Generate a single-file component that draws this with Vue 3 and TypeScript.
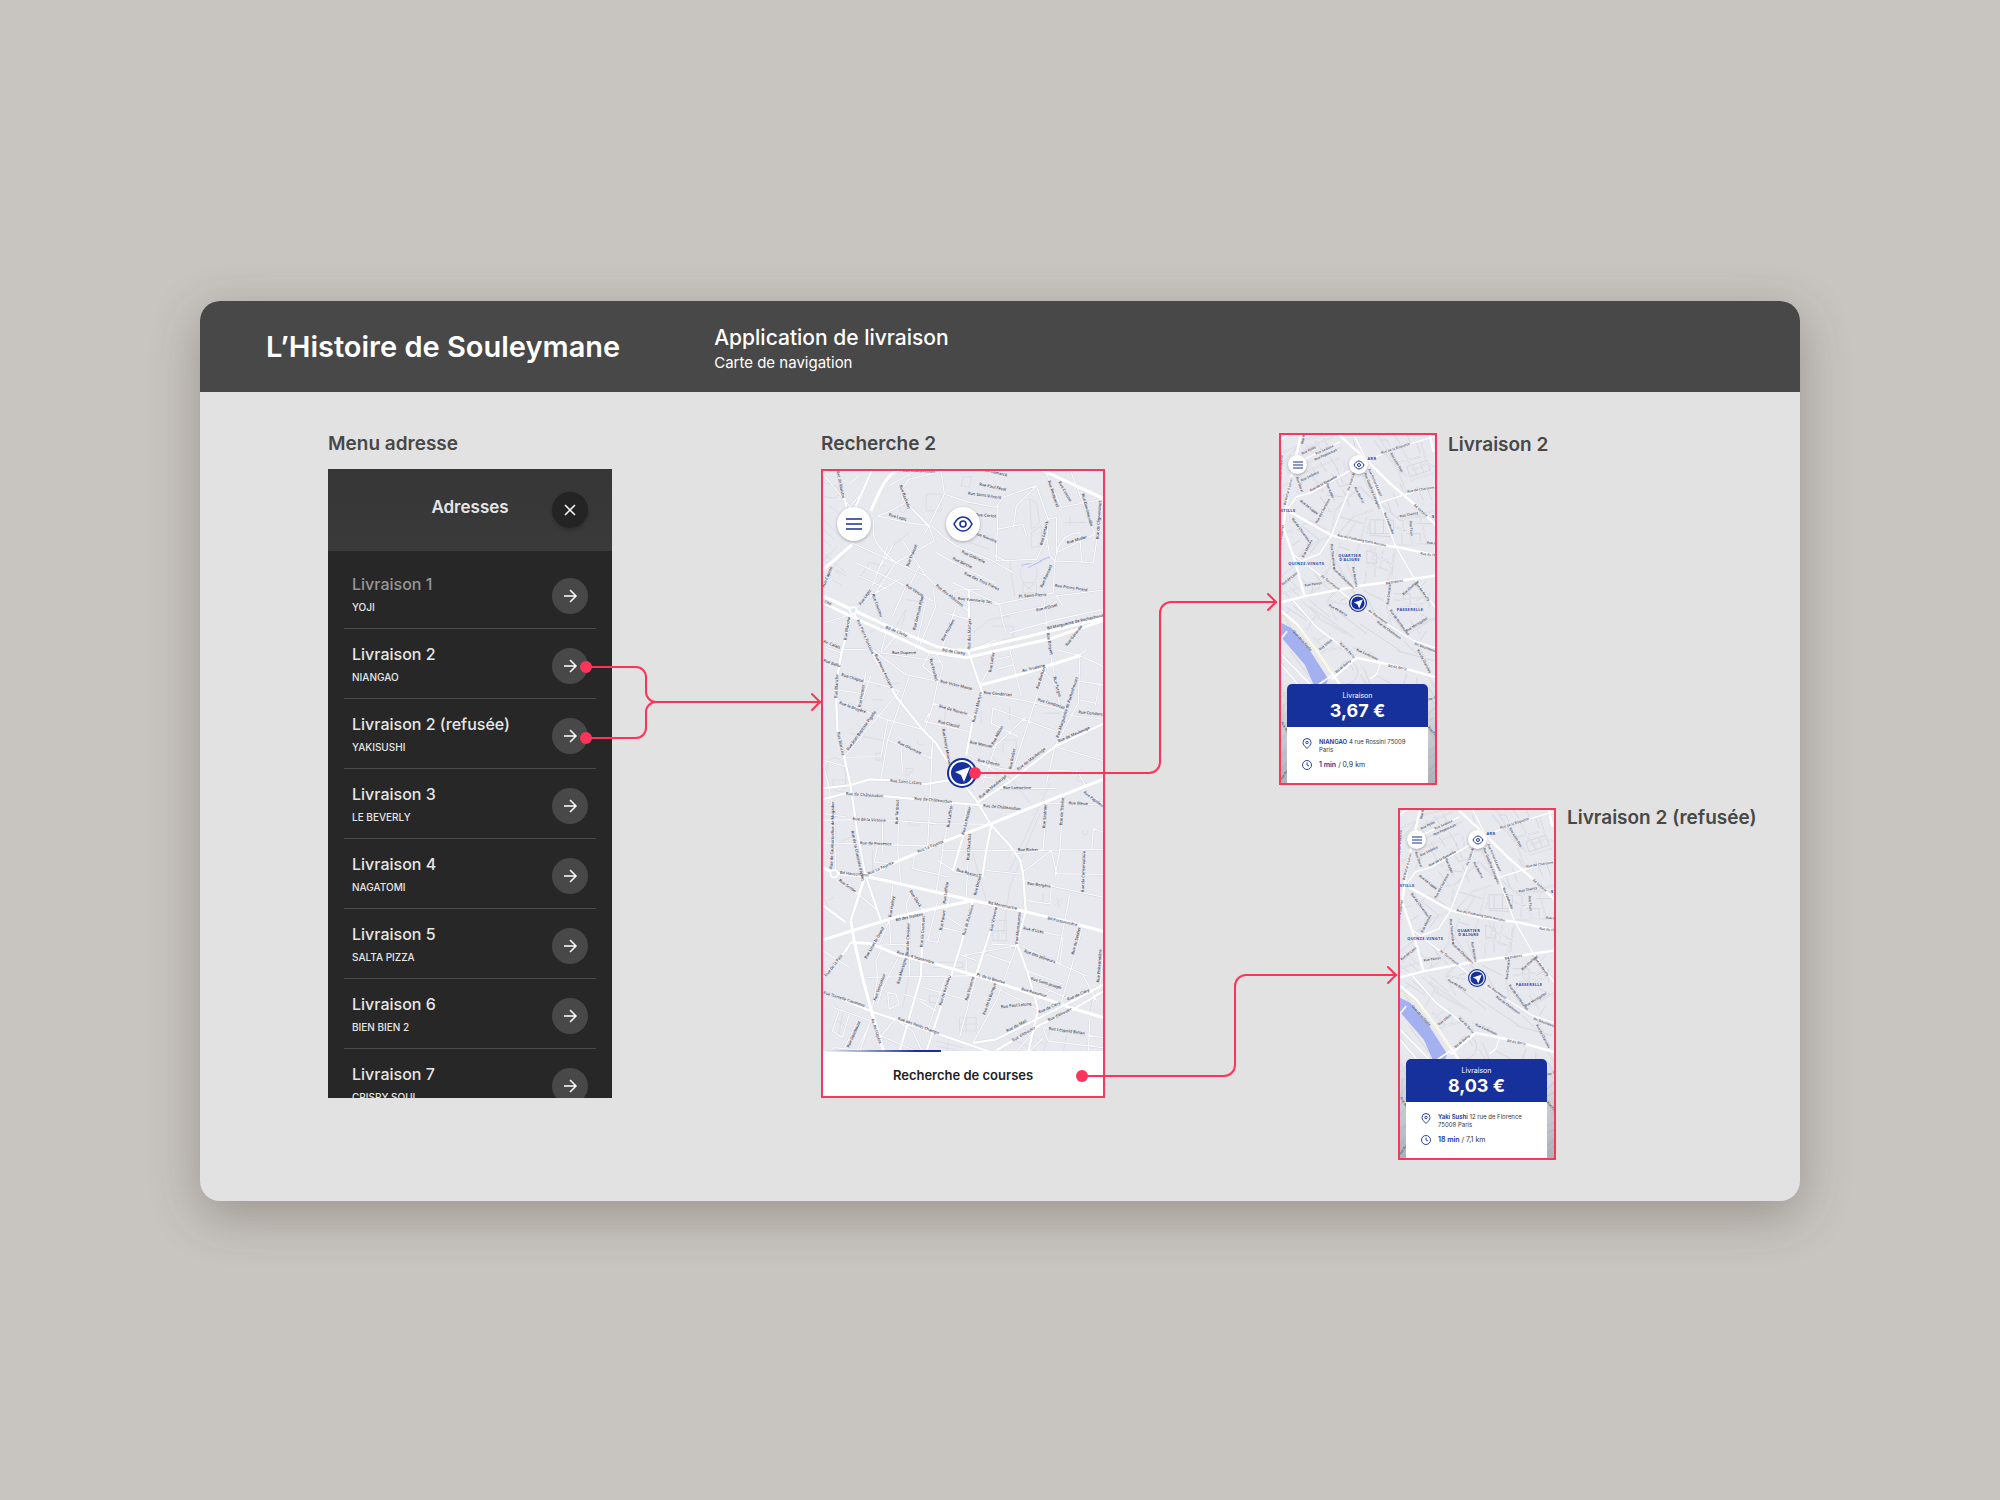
<script setup lang="ts">
interface Address {
  title: string
  place: string
  done?: boolean
}

interface Delivery {
  id: string
  label: string
  price: string
  name: string
  address: string
  time: string
  distance: string
}

/** Street name: text, x, y, rotation in degrees */
type StreetName = [string, number, number, number]

const addresses: Address[] = [
  { title: 'Livraison 1', place: 'YOJI', done: true },
  { title: 'Livraison 2', place: 'NIANGAO' },
  { title: 'Livraison 2 (refusée)', place: 'YAKISUSHI' },
  { title: 'Livraison 3', place: 'LE BEVERLY' },
  { title: 'Livraison 4', place: 'NAGATOMI' },
  { title: 'Livraison 5', place: 'SALTA PIZZA' },
  { title: 'Livraison 6', place: 'BIEN BIEN 2' },
  { title: 'Livraison 7', place: 'CRISPY SOUL' },
]

const deliveries: Delivery[] = [
  {
    id: 'accepted',
    label: 'Livraison 2',
    price: '3,67 €',
    name: 'NIANGAO',
    address: '4 rue Rossini 75009 Paris',
    time: '1 min',
    distance: '0,9 km',
  },
  {
    id: 'refused',
    label: 'Livraison 2 (refusée)',
    price: '8,03 €',
    name: 'Yaki Sushi',
    address: '12 rue de Florence 75008 Paris',
    time: '18 min',
    distance: '7,1 km',
  },
]

const opera = {
  boulevards: [
    'M42 530L132 572 240 622 380 680 430 692 480 692 715 636 879 596',
    'M42 550L125 590 240 642 360 697 470 714 720 658 879 604',
    'M275 150C235 160 215 205 185 275M130 375L42 452',
    'M690 150L879 238',
    'M510 797L640 762 810 708',
    'M879 1078L700 1148 540 1212 400 1265 260 1325 170 1367',
    'M42 1342L75 1358 170 1368 260 1387 380 1415 490 1440 640 1472 760 1500 879 1532',
    'M42 1558L130 1530 260 1490 370 1465 490 1440',
    'M125 1500L135 1560 160 1670 188 1775 225 1895',
    'M125 1565L180 1568 260 1600 380 1630 500 1665 640 1710 780 1760 879 1790',
  ],
  avenues: [
    'M190 150L140 262M84 150L112 262',
    'M132 575L190 700 260 830 340 930 380 970 430 1050 500 1140 545 1215 600 1275 632 1320 640 1360 648 1470 622 1570 652 1650 685 1765 655 1895',
    'M130 580L97 700 80 800 85 930 105 1010 125 1100 145 1240 168 1362 125 1500',
    'M42 1137L110 1120 250 1130 430 1148 510 1155 560 1160',
    'M42 1105L125 1095 180 1078 240 1080 350 1092 420 1080',
    'M42 1712L188 1772 390 1840 548 1895',
    'M879 1692L780 1745 690 1790 560 1855 490 1866M879 1712L790 1765 690 1812 560 1888',
    'M879 912L735 980 600 1085 508 1145',
    'M478 510V700L518 818 490 900 470 1005',
    'M545 1215L530 1290 518 1370M462 1245L430 1352',
    'M490 1440L455 1570 430 1650 350 1895',
    'M562 1468L500 1665M530 1570L500 1660',
    'M42 1455L110 1505M125 1500L165 1380',
    'M340 1480L335 1665 270 1895',
    'M170 1367L215 1500M42 1670L110 1590 125 1565',
  ],
  streets: [
    'M130 372L260 430 350 470 380 500 478 575',
    'M130 372L260 430 200 520 132 572',
    'M260 430L375 365 360 325 280 240 275 215 300 180 395 158 405 225 345 345',
    'M205 290L290 310 365 320 400 350 440 380 540 420 610 460',
    'M195 300C185 350 195 380 260 430M205 290C215 285 220 290 290 250L360 320',
    'M380 400L470 450 555 490 M430 490L570 555 580 610 590 640',
    'M405 225L480 250 560 265 580 235 680 200 715 300 712 350 680 420 560 425 565 260',
    'M680 200L620 260 610 330M565 330L640 315 650 350M555 410L600 430',
    'M430 540L435 512 510 510M430 540L560 555 730 520 735 425 850 430 879 240',
    'M735 425L720 410 710 350M715 300L740 295 740 400 855 345',
    'M710 165L755 265 879 240M780 150L855 345',
    'M735 425C745 370 760 345 810 340L815 430M735 530L879 512',
    'M570 590L730 555M600 640L740 600 879 570M700 520L720 690M740 530L760 560',
    'M140 430L290 500 370 545M150 470L235 510M235 380L190 500',
    'M280 365L350 470M350 545L318 690M290 500L250 590M250 380L215 440',
    'M190 520L215 600M185 530L270 480M330 440L300 500',
    'M372 510L378 565 330 680M440 560L400 680M405 580L480 600',
    'M42 610L110 590M42 680L97 700M100 690L170 690M230 640L215 700 390 725',
    'M42 165L125 265M120 195L150 170M150 230L115 270M240 200L320 155',
    'M190 690L290 765 385 785 520 820 640 842 740 865 790 888 879 898',
    'M385 785L370 860 345 930M370 850L490 890M360 880L345 905 480 935',
    'M235 960L365 1015 370 960 345 930M300 770L235 960 215 1078',
    'M270 815L105 1012 215 1010M95 765L235 800 270 815M85 810L150 820',
    'M85 840L235 900 345 930M170 755L155 850M185 765L150 870',
    'M260 650L225 690M360 700L340 740 390 780 400 740 380 700',
    'M540 690L555 720 510 797M600 690L635 830M555 720L600 710M560 750L610 735',
    'M470 700L560 660M720 690L750 860M710 740L610 1050M695 745L740 800',
    'M810 708L805 850 735 980M810 785L879 795M810 840L855 850M870 790L855 860',
    'M810 708L879 740M740 690L810 708M830 690L810 705',
    'M550 865L545 910 625 950M550 865L740 935M560 975L650 890M520 1090L560 970',
    'M735 980L879 1022M735 980L710 1090M720 1050L820 1055M800 1050L830 1100',
    'M370 960L355 1275M275 980L280 1060M235 900L215 1010',
    'M500 1030L600 1050M490 970L560 985M480 1005L600 1080M500 1070L560 1075',
    'M520 1105L740 1105M700 1148L879 1155M820 1110L879 1152M710 1148L700 1290',
    'M42 1200L220 1198 380 1210 540 1212M42 1268L355 1277M270 1135L265 1290 275 1390',
    'M205 1275L195 1325 240 1330M220 1200L220 1300M315 1305L310 1345 420 1370',
    'M430 1148L400 1280 400 1290 540 1290 879 1288M470 1148L462 1245',
    'M480 1240L470 1430M400 1290L380 1415M385 1320L440 1355 530 1370',
    'M620 1300L700 1290M640 1355L725 1290 740 1360 879 1362M530 1350L640 1362',
    'M760 1130L750 1290 735 1370M820 1290L825 1380M850 1225L845 1290M850 1225L879 1235',
    'M42 1180L110 1190 M60 1100L75 1200 80 1350M42 1030L60 1100M42 1020L110 1040',
    'M80 1380L145 1420 200 1465M145 1420L165 1380M250 1395L240 1500M240 1500L245 1570',
    'M240 1500L210 1570M310 1410L290 1450 300 1500M310 1410L345 1480M300 1500L300 1665',
    'M385 1440L355 1560 385 1565 420 1430M405 1485L460 1520M395 1520L460 1535',
    'M645 1380L879 1430M650 1440L720 1450M725 1390L720 1450M780 1420L740 1630',
    'M640 1520L750 1545M625 1570L750 1630 830 1665M815 1530L755 1745M760 1550L750 1630',
    'M545 1570L622 1575 460 1605M450 1600L500 1620M530 1600L600 1625M470 1600V1660',
    'M622 1570L560 1740 490 1866M650 1650L760 1690M500 1665L450 1850M560 1700L690 1770',
    'M180 1575L300 1570M175 1670L490 1665M215 1590L200 1620 205 1670 190 1760',
    'M270 1605L220 1700 205 1750M235 1715L260 1720 270 1750 240 1765 235 1715',
    'M340 1700L480 1740M330 1740L380 1770M280 1720L350 1740M410 1665L350 1840',
    'M42 1590L120 1640M75 1760L185 1800 140 1895M90 1770L70 1830 100 1850 120 1780',
    'M100 1895L145 1800M60 1895L75 1880 180 1890M188 1790L150 1895M215 1845L320 1890',
    'M260 1790L215 1845M265 1800L310 1830 340 1895M570 1760L665 1750 720 1710',
    'M700 1820L879 1850M700 1820L715 1860 879 1880M820 1665L860 1740M879 1600L870 1700 850 1740',
    'M655 1895L700 1850M840 1790L835 1895M790 1740L700 1700M620 1890L690 1812',
  ],
  lanes: [
    'M42 230C90 250 100 220 80 200L42 190M60 260L100 290M42 300L90 350M42 330L75 360M42 360L65 380',
    'M350 225H395V275H350ZM460 175L485 172 480 205 455 200ZM660 240L680 250 690 310 665 330ZM665 340L695 320 695 380 665 385Z',
    'M640 440C620 460 640 500 665 510M675 440C690 460 680 495 650 510M640 490H680V520H640ZM600 430L615 530',
    'M280 260A10 10 0 1 0 281 260M420 370L440 330M480 370L540 390M760 310H830M780 290V320',
    'M150 480L180 430 230 440M80 450L110 470M70 480L100 500M200 500L240 450M290 540L350 550',
    'M550 620H610V690M490 640L540 600 600 590M250 640L290 570 275 630M180 640L220 620M580 660L650 650',
    'M200 1000H220V1020H200ZM290 1045H312V1055H300V1065H290ZM60 1020C90 1000 110 1030 110 1080S80 1115 65 1100 50 1040 60 1020M70 1080H110V1100H75Z',
    'M325 960A10 10 0 1 0 345 970M560 960H620V990M580 970V1000M700 880H750M600 900V860M515 870V910',
    'M120 940L260 970M140 910L160 925M190 840H220M200 800L270 790M410 860L400 950',
    'M815 1045L800 1080 830 1090M600 1350L720 1090M540 1000L680 1170M820 1230A8 8 0 1 0 830 1230M190 1350V1290M60 1280L150 1240',
    'M550 1500H590V1560H550ZM565 1500V1560M550 1530H590M690 1180L600 1400 580 1540M490 1300L530 1440M300 1200V1215H330',
    'M42 1430L60 1460 42 1470M60 1440L75 1430M370 1625H460V1640H370M360 1725H395V1745H360ZM450 1790H500V1830H450ZM470 1790V1830M450 1810H500',
    'M42 1650L70 1660M85 1800L130 1830M100 1780L90 1840M380 1860L460 1880M380 1875L450 1890M420 1850L410 1890M720 1830L700 1895M770 1840L760 1895',
    'M700 1420V1450M740 1430L750 1460M760 1430L735 1455M300 1660L280 1760M640 1820L700 1870M600 1850L680 1890M850 1720L840 1770',
    'M42 400L110 460M42 420L95 470M60 400L42 425M85 380L50 420M110 400L70 450M300 340L250 380M310 400L290 440',
  ],
}

const operaNames: StreetName[] = [
  ['Rue Caulaincourt', 280, 158, 2], ['Rue de Maistre', 82, 155, 78], ['Rue Lamarck', 520, 155, 14], ['Rue Paul Féval', 508, 199, 12], ['Rue Saint-Vincent', 475, 226, 8],
  ['Rue Cortot', 498, 290, 5], ['Rue Norvins', 495, 345, 22], ['Rue Gabrielle', 455, 400, 25], ['Rue Berthe', 428, 420, 26],
  ['Rue des Trois Frères', 463, 465, 25], ['Rue Yvonne le Tac', 445, 541, 6], ['Rue des Abbesses', 378, 500, 38],
  ['Rue Véron', 288, 500, 33], ['Rue Lepic', 238, 290, 16], ['Rue Tholozé', 298, 442, -68], ['Rue Lepic', 155, 558, -55],
  ['Rue Coustou', 188, 525, 70], ['Rue Germain Pilon', 318, 632, -76], ['Rue Houdon', 402, 665, -62], ['Rue Blanche', 112, 662, -80],
  ['Rue Pierre Fontaine', 142, 602, 66], ['Bd de Clichy', 228, 626, 22], ['Bd de Clichy', 398, 694, 10], ['Rue des Martyrs', 482, 690, -89],
  ['Rue Lamarck', 698, 378, -76], ['Rue Muller', 772, 374, -16], ['Rue Ronsard', 698, 505, -66], ['Rue Pierre Picard', 735, 502, 8],
  ['Pl. Saint-Pierre', 627, 535, -4], ['Rue d’Orsel', 680, 576, -14], ['Bd Marguerite de Rochechouart', 712, 630, -13],
  ['Rue Becquerel', 714, 186, 72], ['Rue Custine', 745, 190, 60], ['Rue Doudeauville', 815, 225, 75], ['Rue de Clignancourt', 866, 360, -86],
  ['Rue Bachelet', 270, 200, 70], ['Rue Briquet', 710, 640, 80], ['Rue Gérando', 772, 680, -52], ['Cité', 45, 550, 22], ['Rue Capron', 46, 505, -68],
  ['Av. Calais', 42, 668, 22], ['Rue Duperré', 248, 704, 0], ['Rue Pierre Fontaine', 195, 706, 64], ['Rue Ballu', 42, 725, 20], ['Rue Blanche', 84, 835, -87],
  ['Rue Chaptal', 96, 768, 17], ['Rue la Bruyère', 90, 852, 20], ['Rue Henner', 155, 862, -80], ['Rue Jean-Baptiste Pigalle', 118, 992, -54],
  ['Rue Blanche', 84, 938, 78], ['Rue d’Aumale', 264, 970, 26], ['Rue Frochot', 360, 718, 75], ['Rue Victor Massé', 392, 788, 14],
  ['Rue de Navarin', 388, 862, 16], ['Rue Clauzel', 385, 908, 14], ['Rue Henry Monnier', 398, 928, 80], ['Rue Condorcet', 522, 822, 5], ['Rue Lallier', 545, 758, -80],
  ['Av. Trudaine', 638, 758, -14], ['Rue Bochart', 686, 808, -72], ['Rue Turgot', 730, 772, 75], ['Rue Condorcet', 683, 842, 18],
  ['Rue Condorcet', 805, 880, 6], ['Rue Marguerite de Rochechouart', 746, 954, -72], ['Rue de Maubeuge', 746, 968, -24], ['Rue Manuel', 480, 970, 12],
  ['Rue des Martyrs', 495, 908, -76], ['Rue Choron', 503, 1024, 12], ['Rue Milton', 552, 975, -62], ['Rue Rodier', 605, 1048, -78], ['Rue de Maubeuge', 512, 1136, -40],
  ['Rue de Maubeuge', 626, 1052, -38], ['Rue Saint-Lazare', 242, 1085, 5], ['Rue de Châteaudun', 110, 1124, 4], ['Rue de Châteaudun', 315, 1139, 5],
  ['Rue de Châteaudun', 520, 1160, 5], ['Rue Lamartine', 580, 1108, 0], ['Rue Bleue', 776, 1152, 3], ['Rue Papillon', 820, 1118, 38],
  ['Rue de la Victoire', 130, 1200, 3], ['Rue Taitbout', 266, 1212, -88], ['Rue de Provence', 152, 1272, 2], ['Rue La Fayette', 178, 1364, -24],
  ['Rue La Fayette', 326, 1298, -22], ['Rue Laffitte', 420, 1222, -82], ['Rue Le Peletier', 464, 1244, -76], ['Rue Chauchat', 479, 1320, -86],
  ['Rue de Mogador', 74, 1240, -90], ['Rue de la Chaussée d’Antin', 126, 1232, 78], ['Rue de Caumartin', 70, 1345, -87], ['Rue Saulnier', 706, 1224, -86],
  ['Rue de Trévise', 757, 1215, -86], ['Rue Richer', 624, 1291, 0], ['Rue Rossini', 440, 1352, 16], ['Bd Haussmann', 92, 1360, 6],
  ['Rue Bergère', 652, 1392, 8], ['Rue Drouot', 500, 1425, -76], ['Rue Laffitte', 408, 1450, -82], ['Rue du Conservatoire', 822, 1415, -88], ['Rue Scribe', 88, 1382, 35],
  ['Rue Halévy', 246, 1490, -80], ['Rue Gluck', 300, 1412, 58], ['Bd des Italiens', 260, 1502, -12], ['Bd Montmartre', 535, 1450, 12],
  ['Bd Poissonnière', 712, 1496, 13], ['Rue de Richelieu', 466, 1545, -74], ['Rue Vivienne', 548, 1532, -78], ['Rue Montmartre', 624, 1570, -84],
  ['Rue d’Uzès', 640, 1526, 12], ['Rue des Jeûneurs', 642, 1594, 20], ['Rue du Sentier', 792, 1602, -76], ['Rue Poissonnière', 868, 1685, -86],
  ['Rue Saint-Joseph', 662, 1676, 18], ['Rue Réaumur', 634, 1708, 16], ['Rue de Cléry', 774, 1740, -24], ['Rue de Cléry', 688, 1778, -24],
  ['Rue d’Aboukir', 716, 1802, -26], ['Rue d’Aboukir', 610, 1862, -30], ['Rue du Mail', 592, 1834, -28], ['Rue Paul Lelong', 574, 1762, -6], ['Rue Léopold Bellan', 716, 1826, 8],
  ['Rue du 4 Septembre', 262, 1598, 16], ['Pl. de la Bourse', 500, 1665, 16], ['Rue de Gramont', 340, 1580, -86], ['Rue de Choiseul', 298, 1600, -88],
  ['Rue Monsigny', 270, 1690, -74], ['Rue Louis le Grand', 172, 1615, -60], ['Rue de la Paix', 52, 1668, -52], ['Rue Danielle Casanova', 42, 1718, 18],
  ['Rue des Petits Champs', 265, 1796, 20], ['Rue Ventadour', 200, 1740, -70], ['Rue de Richelieu', 396, 1755, -72], ['Rue Vivienne', 474, 1740, -74], ['Rue de la Banque', 526, 1782, -70],
  ['Av. de l’Opéra', 186, 1794, 72], ['Rue Gomboust', 120, 1880, -66], ['Rue Favart', 398, 1530, -80],
]

const bastille = {
  boulevards: [
    'M124 42L88 200 70 320 105 420 135 530',
    'M60 546L140 526 300 496 460 475 528 465',
    'M235 42L320 120 390 190 460 250 528 315',
    'M90 275L215 345 300 365 410 380 528 405',
    'M240 792L170 690 110 610 63 570',
    'M528 770L440 745 380 730 290 712 215 775',
    'M508 42L520 95',
  ],
  avenues: [
    'M75 280L110 230 160 215 290 140 390 90 528 48',
    'M285 165L240 280 215 345 180 400 130 420',
    'M350 250L440 222 528 195',
    'M280 42L320 120 360 250 405 375 460 470 528 565',
    'M100 402L200 480 300 560 380 610 460 660 528 682',
    'M100 540L170 620 290 712M63 700L160 800M63 730L130 810',
    'M360 730L350 760 330 775',
    'M130 120L240 65M63 60L85 42',
  ],
  streets: [
    'M63 100L110 80M70 130L130 60 210 42M130 90L220 50M140 130L250 80M110 165L240 115M150 155L190 215',
    'M200 190L225 245M225 270L300 200 340 240M185 275L225 270 215 345M120 240L190 290M110 220L130 180 110 160',
    'M300 150L350 250M250 120L260 170M340 60L400 130 430 160M380 90L440 170M420 75L460 150 500 130',
    'M400 130L480 110M440 222L410 140M450 180L520 160M480 60L500 130 525 140M350 42L380 90',
    'M405 375L525 370M360 250L420 300 525 270M430 290L425 370M450 300L455 370M370 300H330L320 340',
    'M480 290L500 370M400 320L440 330M300 365L320 290M235 340L280 290 340 270M260 350L290 300',
    'M100 290L145 360 130 420M105 420L160 370 215 345M215 370L210 440 190 470M240 370L225 420 275 500',
    'M230 450L300 540M260 430L290 500M300 365L280 430 290 495M320 440L315 495M410 380L380 490',
    'M330 380L340 400 330 440M370 390L360 440M340 410L380 420M320 430L380 450M345 380V470M375 420L400 440',
    'M140 490L200 485M70 500L105 460M63 470L110 430M135 530L180 500M230 510L200 540 300 560',
    'M390 500L380 560 400 640M400 540L480 530M430 530L470 480M460 480L510 560M420 560L525 545',
    'M150 560L210 600 280 650M170 580L140 630M200 540L230 600M63 560L100 640M63 520L120 500',
    'M390 580L440 640 500 600M470 660L510 750M350 600L410 650M440 640L528 590M430 545L480 560',
    'M160 650L200 690 250 680M170 660L210 640 215 670M240 660L290 712M280 680L340 700M250 750L270 720',
    'M180 700L220 680M63 800L110 900M70 860L90 830M63 900L85 870M63 1000L90 980M63 1050L85 1020',
    'M63 960L85 930M500 760L525 800M505 880L525 860M500 920L525 960M505 990L525 980M505 1050L525 1030',
    'M63 200L90 190M63 340L100 330M70 370L63 400M63 230L80 225M170 590L260 640',
  ],
  lanes: [
    'M140 75L160 100M165 62L185 90M190 55L205 80M155 140L175 170M180 125L200 155M210 110L235 150M230 145L250 190M215 160L240 200M240 200L270 190',
    'M440 140L500 120 510 150 450 170ZM460 140L470 165M480 130L490 155M420 190L430 215M470 200L490 240M500 200L515 240M400 220L415 260M380 240L395 280',
    'M330 300H400V340H330ZM345 300V340M370 300V340M410 290L440 280M460 290H520M470 310H520M440 340H480V365M330 345L400 350M240 290L310 310',
    'M150 300L200 330M130 320L180 360M150 400L180 360M110 330L150 300M90 380L120 360M240 380L270 390M320 390L350 400V430L320 425ZM355 440L385 450M400 400L395 470M420 400L445 440',
    'M80 470L120 510M100 450L140 490M150 440L180 480M63 510L90 530M90 500L120 530M160 500L150 530M170 470L220 520',
    'M240 540L270 530M310 510L370 540M320 530L350 590M400 520H450V560M430 510V540M480 500L500 480M470 540L510 520M480 580L520 600',
    'M80 560L140 600M100 555L150 600M130 545L180 590M150 540L210 590M63 590L90 570',
    'M240 740C250 715 280 715 290 740S280 790 260 790M250 745C260 730 275 730 280 750M310 740L330 790M300 760L320 792M90 690L150 770M80 710L120 760M63 720L100 780',
    'M400 590L420 570M450 600L480 640M480 660L500 630M430 660L470 700M410 690L520 720M300 610L420 690M230 570L320 640M340 760L400 792M440 760L430 792M470 770V792',
    'M63 830L85 810M70 850V900M63 930L85 900M505 800L525 830M505 830L525 850M505 900L525 890M505 940L525 930M505 1010L525 1000M63 1010L85 990M63 1070L85 1050M505 1070L525 1050',
    'M280 60L290 100M360 60L380 60 390 80M400 42L420 70M440 42L450 65M470 70L480 100M200 225L250 230M180 230L210 270M140 250L170 280M250 210L270 260',
  ],
}

const bastilleNames: StreetName[] = [
  ['Rue Amelot', 130, 72, -80], ['Rue Pelée', 127, 104, -26], ['Rue Sedaine', 168, 104, -24], ['Rue Popincourt', 165, 122, -24], ['Rue Sedaine', 125, 184, -26],
  ['Rue de la Roquette', 152, 214, -28], ['Rue de la Roquette', 364, 102, -18], ['Bd Richard-Lenoir', 78, 255, -76], ['Rue Daval', 108, 172, 70],
  ['Rue Keller', 198, 190, 68], ['Av. Ledru-Rollin', 268, 212, -72], ['Rue Basfroi', 282, 202, 62], ['Rue Godefroy Cavaignac', 312, 160, 68],
  ['Rue Richard Lenoir', 324, 148, 66], ['Rue Léon Frot', 390, 100, 60], ['Rue de Charonne', 442, 218, -10], ['Bd Voltaire', 460, 256, 42], ['Rue Faidherbe', 370, 278, 68],
  ['Rue Chanzy', 420, 292, -12], ['Rue Titon', 448, 302, 86], ['Rue du Faubourg Saint-Antoine', 232, 348, 12], ['Rue de Montreuil', 500, 370, 4], ['Rue du Fbg', 480, 402, 8],
  ['Rue de Lappe', 120, 244, 38], ['Rue de Charonne', 172, 310, -62], ['Rue de Charenton', 95, 296, 54], ['Rue Moreau', 132, 412, -64], ['Rue Traversière', 212, 372, 84],
  ['Rue de Charenton', 218, 446, 44], ['Rue Parrot', 135, 498, -8], ['Av. Daumesnil', 182, 468, 38], ['Rue Beccaria', 276, 440, 80], ['Bd Diderot', 378, 492, -10],
  ['Rue Crozatier', 386, 552, -84], ['Rue Chaligny', 430, 525, -42], ['Rue de Reuilly', 465, 488, 54], ['Rue de Lyon', 68, 495, -38], ['Av. Daumesnil', 324, 572, 36],
  ['Rue de Charenton', 350, 606, 36], ['Rue de Rambouillet', 388, 570, 54], ['Rue Montgallet', 440, 634, -32], ['Av. Daumesnil', 462, 672, 20], ['Rue de Charolais', 470, 688, 62],
  ['Rue de Bercy', 206, 556, 30], ['Quai de la Rapée', 98, 632, 48], ['Rue Villiot', 180, 690, -38], ['Rue de Bercy', 238, 670, 44], ['Rue Corbineau', 288, 690, 24],
  ['Bd de Bercy', 230, 758, -40], ['Bd de Bercy', 384, 738, 10], ['Rue Biscornet', 63, 380, -82], ['Bd de la Bastille', 64, 180, -86],
  ['Rue Buffon', 64, 905, 62], ['Rue Poliveau', 64, 1078, -52], ['Rue Proudhon', 502, 920, 50], ['Rue Taine', 500, 840, -12],
]
</script>

<template>
  <main class="page">
    <section class="board">
      <header class="board-header">
        <h1>L’Histoire de Souleymane</h1>
        <div class="subject">
          <h2>Application de livraison</h2>
          <p>Carte de navigation</p>
        </div>
      </header>

      <div class="flow">
        <section class="node node-menu">
          <h3 class="node-label">Menu adresse</h3>
          <div class="menu">
            <div class="menu-head">
              <h4>Adresses</h4>
              <button type="button" class="round close" aria-label="Fermer">
                <svg viewBox="0 0 16 16" width="16" height="16"><path d="M3 3l10 10M13 3L3 13" /></svg>
              </button>
            </div>
            <ul class="menu-list">
              <li v-for="item in addresses" :key="item.title" :class="{ done: item.done }">
                <div class="entry">
                  <strong>{{ item.title }}</strong>
                  <span>{{ item.place }}</span>
                </div>
                <button type="button" class="round" :aria-label="'Ouvrir ' + item.title">
                  <svg viewBox="0 0 16 16" width="16" height="16"><path d="M2 8h12M8 2l6 6-6 6" /></svg>
                </button>
              </li>
            </ul>
          </div>
        </section>

        <section class="node node-search">
          <h3 class="node-label">Recherche 2</h3>
          <div class="screen screen-large">
            <div class="map">
              <svg class="streets-map" viewBox="42 153 837 1740" preserveAspectRatio="xMidYMid slice">
                <path class="lane" :d="opera.lanes.join('')" />
                <path class="street-edge" :d="opera.streets.join('')" />
                <path class="avenue-edge" :d="opera.avenues.join('')" />
                <path class="boulevard-edge" :d="opera.boulevards.join('')" />
                <path class="street" :d="opera.streets.join('')" />
                <path class="avenue" :d="opera.avenues.join('')" />
                <path class="boulevard" :d="opera.boulevards.join('')" />
                <path class="water-mark" d="M635 438l30 -6M690 425l30 -12M655 445l40 -20" />
                <circle class="place" cx="132" cy="573" r="10" />
                <circle class="place" cx="75" cy="1360" r="11" />
                <text
                  v-for="([name, x, y, angle], i) in operaNames"
                  :key="i"
                  class="street-name"
                  :transform="`translate(${x} ${y}) rotate(${angle})`"
                >{{ name }}</text>
              </svg>
              <button type="button" class="map-button map-menu" aria-label="Menu">
                <svg viewBox="0 0 18 18" width="18" height="18"><path d="M1 4h16M1 9h16M1 14h16" /></svg>
              </button>
              <button type="button" class="map-button map-eye" aria-label="Afficher">
                <svg viewBox="0 0 20 20" width="20" height="20">
                  <path d="M1 10C3 6 6 3 10 3s7 3 9 7c-2 4-5 7-9 7s-7-3-9-7z" /><circle cx="10" cy="10" r="3" />
                </svg>
              </button>
              <svg class="position" viewBox="0 0 30 30">
                <circle cx="15" cy="15" r="15" class="disc" />
                <circle cx="15" cy="15" r="12" class="ring" />
                <path d="M23 9L8 14l6 3 3 7z" class="needle" />
              </svg>
            </div>
            <div class="searching"><i class="progress"></i>Recherche de courses</div>
          </div>
        </section>

        <section v-for="d in deliveries" :key="d.id" class="node node-delivery" :class="d.id">
          <div class="screen screen-small">
            <svg class="streets-map" viewBox="63 45 462 1041" preserveAspectRatio="xMidYMid slice">
              <path class="lane" :d="bastille.lanes.join('')" />
              <path class="street-edge" :d="bastille.streets.join('')" />
              <path class="avenue-edge" :d="bastille.avenues.join('')" />
              <path class="street" :d="bastille.streets.join('')" />
              <path class="avenue" :d="bastille.avenues.join('')" />
              <path class="boulevard" :d="bastille.boulevards.join('')" />
              <path class="river" d="M60 605L95 622 150 690 205 775 195 800H165L135 732 60 645Z" />
              <path class="quay" d="M63 592L80 600 112 616 158 675 215 755" />
              <path class="avenue" d="M63 655L82 632M175 792L215 765" />
              <text
                v-for="([name, x, y, angle], i) in bastilleNames"
                :key="i"
                class="street-name"
                :transform="`translate(${x} ${y}) rotate(${angle})`"
              >{{ name }}</text>
              <g class="district">
                <text x="336" y="120">ARR</text>
                <text x="85" y="276">STILLE</text>
                <text x="269" y="409">QUARTIER</text>
                <text x="269" y="423">D’ALIGRE</text>
                <text x="139" y="434">QUINZE-VINGTS</text>
                <text x="450" y="571">PASSERELLE</text>
                <text x="519" y="292">S</text>
              </g>
            </svg>
            <div class="shade"></div>
            <button type="button" class="map-button map-menu" aria-label="Menu">
              <svg viewBox="0 0 10 10" width="10" height="10"><path d="M0 2h10M0 5h10M0 8h10" /></svg>
            </button>
            <button type="button" class="map-button map-eye" aria-label="Afficher">
              <svg viewBox="0 0 12 12" width="12" height="12">
                <path d="M1 6C2 4 4 2 6 2s4 2 5 4c-1 2-3 4-5 4s-4-2-5-4z" /><circle cx="6" cy="6" r="1.500" />
              </svg>
            </button>
            <svg class="position" viewBox="0 0 30 30">
              <circle cx="15" cy="15" r="15" class="disc" />
              <circle cx="15" cy="15" r="12" class="ring" />
              <path d="M23 9L8 14l6 3 3 7z" class="needle" />
            </svg>
            <article class="offer">
              <div class="offer-head">
                <span>Livraison</span>
                <strong>{{ d.price }}</strong>
              </div>
              <div class="offer-body">
                <div class="offer-line address">
                  <svg viewBox="0 0 20 22" width="10" height="11">
                    <path d="M10 21C5 16 2 13 2 9a8 8 0 0 1 16 0C18 13 15 16 10 21z" /><circle cx="10" cy="9" r="2.500" />
                  </svg>
                  <p><b>{{ d.name }}</b> {{ d.address }}</p>
                </div>
                <div class="offer-line trip">
                  <svg viewBox="0 0 20 20" width="10" height="10"><circle cx="10" cy="10" r="9" /><path d="M10 5v5l4 2" /></svg>
                  <p><b>{{ d.time }}</b> / {{ d.distance }}</p>
                </div>
              </div>
            </article>
          </div>
          <h3 class="node-label">{{ d.label }}</h3>
        </section>

        <svg class="links" width="1600" height="809" viewBox="0 0 1600 809" aria-hidden="true">
          <path d="M387 275H436A10 10 0 0 1 446 285V300A10 10 0 0 0 456 310H620" />
          <path d="M387 346H436A10 10 0 0 0 446 336V320A10 10 0 0 1 456 310" />
          <path d="M612 302L620 310 612 318" />
          <path d="M775 381H949A11 11 0 0 0 960 370V221A11 11 0 0 1 971 210H1076" />
          <path d="M1068 202L1076 210 1068 218" />
          <path d="M882 684H1024A11 11 0 0 0 1035 673V594A11 11 0 0 1 1046 583H1196" />
          <path d="M1188 575L1196 583 1188 591" />
          <circle cx="386" cy="275" r="6" />
          <circle cx="386" cy="346" r="6" />
          <circle cx="775" cy="381" r="6" />
          <circle cx="882" cy="684" r="6" />
        </svg>
      </div>
    </section>
  </main>
</template>

<style>
body {
  margin: 0;
  background: #c8c4bf;
}
</style>

<style scoped>
.page {
  min-height: 100vh;
  box-sizing: border-box;
  padding: 50px 10% 48px;
  display: flex;
  align-items: center;
  font-family: Inter, "Liberation Sans", sans-serif;
  color: #484848;
}

h1, h2, h3, h4, p, ul {
  margin: 0;
  padding: 0;
}

button {
  border: 0;
  padding: 0;
  display: flex;
  align-items: center;
  justify-content: center;
  border-radius: 50%;
}

svg {
  display: block;
  flex: none;
}

.board {
  flex: 1;
  min-width: 0;
  border-radius: 20px;
  overflow: hidden;
  background: #e2e2e2;
  box-shadow: 0 14px 50px rgba(60, 50, 45, 0.32);
}

.board-header {
  display: flex;
  align-items: center;
  gap: 94px;
  box-sizing: border-box;
  min-height: 91px;
  padding: 0 66px;
  background: #484848;
  color: #fff;
}

.board-header h1 {
  font-size: 29px;
  line-height: 36px;
  font-weight: 600;
}

.subject {
  padding-top: 6px;
}

.subject h2 {
  font-size: 21px;
  line-height: 26px;
  font-weight: 500;
}

.subject p {
  font-size: 15px;
  line-height: 24px;
}

.flow {
  position: relative;
  min-height: 809px;
}

.node {
  position: absolute;
}

.node-menu {
  left: 128px;
  top: 40px;
}

.node-search {
  left: 621px;
  top: 40px;
}

.node-delivery {
  display: flex;
  align-items: flex-start;
  gap: 11px;
}

.accepted {
  left: 1079px;
  top: 41px;
}

.refused {
  left: 1198px;
  top: 416px;
}

.node-label {
  font-size: 19px;
  line-height: 24px;
  font-weight: 600;
  white-space: nowrap;
}

.node-menu .node-label,
.node-search .node-label {
  margin-bottom: 13px;
}

.refused .node-label {
  line-height: 20px;
}

.menu {
  width: 284px;
  height: 629px;
  overflow: hidden;
  background: #272727;
  color: #e6e6e6;
}

.menu-head {
  display: grid;
  grid-template-columns: 36px 1fr 36px;
  align-items: center;
  height: 82px;
  padding: 0 24px;
  background: linear-gradient(#363636, #3a3a3a);
}

.menu-head h4 {
  grid-column: 2;
  padding-bottom: 6px;
  text-align: center;
  font-size: 17px;
  line-height: 24px;
  font-weight: 600;
}

.round {
  width: 36px;
  height: 36px;
  background: #484848;
}

.round svg {
  fill: none;
  stroke: #fff;
  stroke-width: 1.500;
}

.close {
  background: #242424;
  box-shadow: 0 2px 4px rgba(0, 0, 0, 0.2);
}

.menu-list {
  list-style: none;
  padding: 8px 16px 0;
}

.menu-list li {
  display: flex;
  align-items: center;
  justify-content: space-between;
  box-sizing: border-box;
  height: 70px;
  padding: 4px 8px 0;
  border-bottom: 1px solid #4c4c4c;
}

.entry {
  padding-bottom: 2px;
}

.entry strong,
.entry span {
  display: block;
}

.entry strong {
  font-size: 16px;
  line-height: 24px;
  font-weight: 500;
}

.entry span {
  font-size: 10px;
  line-height: 22px;
  font-weight: 500;
}

.done .entry strong {
  color: #969696;
}

.screen {
  position: relative;
  box-sizing: border-box;
  overflow: hidden;
  border: 2px solid #f43a5c;
  background: #e8e9ef;
}

.screen-large {
  display: flex;
  flex-direction: column;
  width: 284px;
  height: 629px;
}

.screen-small {
  width: 158px;
  height: 352px;
}

.map {
  position: relative;
  flex: 1;
  min-height: 0;
}

.streets-map {
  width: 100%;
  height: 100%;
  font-family: "Noto Sans", Inter, sans-serif;
}

.streets-map path {
  fill: none;
  stroke-linejoin: round;
}

.streets-map .lane { stroke: #d6d7de; stroke-width: 2; }
.streets-map .street-edge { stroke: #d0d1da; stroke-width: 6; }
.streets-map .street { stroke: #fafafd; stroke-width: 4; }
.streets-map .avenue-edge { stroke: #d5d6df; stroke-width: 9; }
.streets-map .avenue { stroke: #fff; stroke-width: 7; }
.streets-map .boulevard-edge { stroke: #dcdde4; stroke-width: 12; }
.streets-map .boulevard { stroke: #fff; stroke-width: 10; }
.streets-map .water-mark { stroke: #b4bff0; stroke-width: 3; }
.streets-map .quay { stroke: #f1ec9c; stroke-width: 2; }
.streets-map .river { fill: #a3b1f0; }

.place {
  fill: #e6e7ee;
  stroke: #fff;
  stroke-width: 5;
}

.street-name {
  font-size: 12px;
  font-weight: 500;
  fill: #3a3e54;
}

.screen-small .streets-map .lane { stroke: #cdced6; }
.screen-small .streets-map .street-edge { stroke: #c9cad4; stroke-width: 4; }
.screen-small .streets-map .street { stroke-width: 2; }
.screen-small .streets-map .avenue-edge { stroke-width: 6; }
.screen-small .streets-map .avenue { stroke-width: 5; }
.screen-small .streets-map .boulevard { stroke-width: 7; }

.screen-small .street-name {
  font-size: 10px;
}

.district {
  font-size: 12px;
  font-weight: 700;
  letter-spacing: 1px;
  text-anchor: middle;
  fill: #2c49a6;
}

.shade {
  position: absolute;
  inset: 50% 0 0;
  background: linear-gradient(transparent 40%, rgba(90, 92, 104, 0.4));
}

.map-button {
  position: absolute;
  top: 36px;
  width: 34px;
  height: 34px;
  background: #fff;
  box-shadow: 0 1px 3px rgba(40, 40, 60, 0.35);
}

.map-button svg {
  fill: none;
  stroke: #16319c;
  stroke-width: 1.600;
}

.map-menu {
  left: 14px;
}

.map-eye {
  left: 123px;
}

.screen-small .map-button {
  top: 20px;
  width: 19px;
  height: 19px;
}

.screen-small .map-button svg {
  stroke-width: 1;
}

.screen-small .map-menu {
  left: 7px;
}

.screen-small .map-eye {
  left: 68px;
}

.position {
  position: absolute;
  left: 124px;
  top: 287px;
  width: 30px;
  height: 30px;
}

.screen-small .position {
  left: 68px;
  top: 159px;
  width: 18px;
  height: 18px;
}

.disc {
  fill: #16319c;
}

.ring {
  fill: none;
  stroke: #fff;
  stroke-width: 2;
}

.needle {
  fill: #fff;
}

.searching {
  position: relative;
  height: 45px;
  background: #fff;
  color: #222;
  text-align: center;
  font-size: 13px;
  line-height: 48px;
  font-weight: 600;
}

.progress {
  position: absolute;
  left: 0;
  top: -1px;
  width: 42%;
  height: 2px;
  background: linear-gradient(90deg, transparent, #16319c 80%);
}

.offer {
  position: absolute;
  left: 6px;
  right: 7px;
  bottom: 0;
  height: 99px;
  border-radius: 5px 5px 0 0;
  overflow: hidden;
  background: #fff;
}

.offer-head {
  box-sizing: border-box;
  height: 43px;
  padding-top: 7px;
  background: #16319c;
  color: #fff;
  text-align: center;
}

.offer-head span,
.offer-head strong {
  display: block;
}

.offer-head span {
  font-size: 7px;
  line-height: 10px;
}

.offer-head strong {
  font-size: 18px;
  line-height: 20px;
  font-weight: 700;
}

.offer-body {
  padding: 11px 12px 0 15px;
}

.offer-line {
  display: flex;
  align-items: flex-start;
  gap: 7px;
  font-size: 7px;
  line-height: 8px;
  color: #333;
}

.address {
  height: 22px;
  font-size: 6px;
}

.offer-line p {
  flex: 1;
}

.trip p {
  padding-top: 1px;
}

.offer-line b {
  font-weight: 600;
  color: #16319c;
}

.offer-line svg {
  fill: none;
  stroke: #2a44a6;
  stroke-width: 2;
}

.links {
  position: absolute;
  left: 0;
  top: 0;
  pointer-events: none;
}

.links path {
  fill: none;
  stroke: #fd345a;
  stroke-width: 2;
  stroke-linecap: round;
}

.links circle {
  fill: #fd345a;
}
</style>
